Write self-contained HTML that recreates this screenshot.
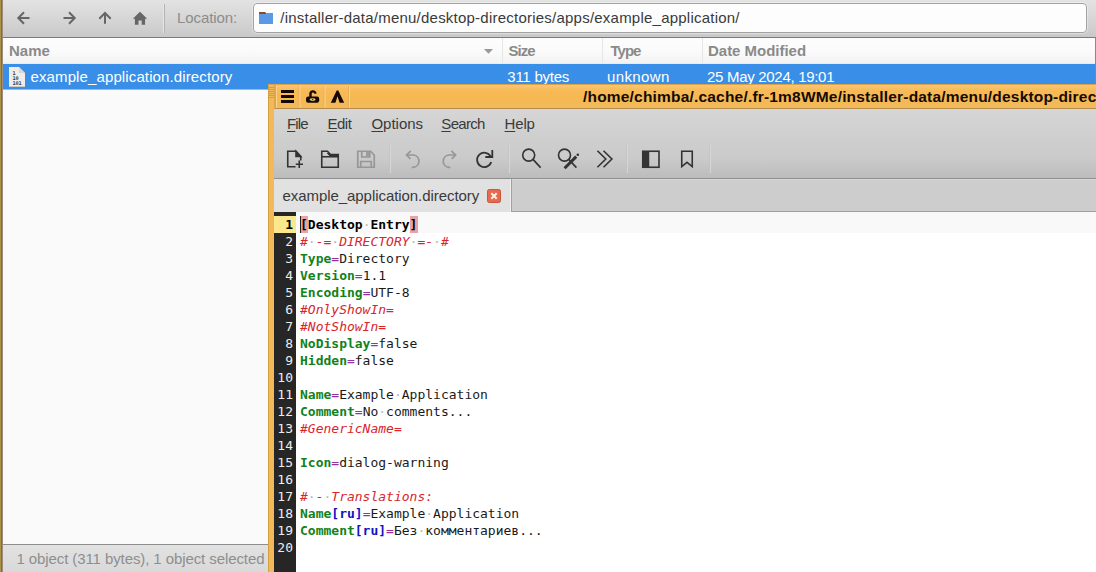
<!DOCTYPE html>
<html><head><meta charset="utf-8"><title>example_application.directory</title>
<style>
*{box-sizing:border-box;margin:0;padding:0}
html,body{width:1096px;height:572px;overflow:hidden;background:#fafafa}
body{position:relative;font-family:"Liberation Sans",sans-serif;font-size:15px;color:#3a3a3a}
.abs{position:absolute}
.t{position:absolute;white-space:nowrap;line-height:20px;height:20px}
/* outer file manager */
#lborder{left:0;top:0;width:3px;height:572px;background:linear-gradient(90deg,#ab9448 0,#ab9448 1px,#856b3b 1px,#856b3b 2px,#a08c80 2px)}
#ftool{left:2px;top:0;width:1094px;height:37px;background:linear-gradient(#e3e3e3,#c9c9c9)}
#ftoolline{left:2px;top:37px;width:1094px;height:1px;background:#7b7b7b}
#loc{left:253px;top:3px;width:834px;height:30px;background:#fdfdfd;border:1px solid #a3a3a3;border-radius:4px;box-shadow:0 0 0 1px rgba(255,255,255,.35)}
#hdr{left:2px;top:38px;width:1093px;height:26px;background:linear-gradient(#fdfdfd 0,#fafafa 60%,#f2f2f2 100%);border-bottom:1px solid #ebebeb}
.hsep{position:absolute;top:38px;width:1px;height:25px;background:#e6e6e6}
.hd{font-weight:bold;color:#8a8a8a}
#sel{left:2px;top:64px;width:1093px;height:26px;background:#398ee7;border-bottom:1px solid #8fbff1}
#rstrip{left:1095px;top:38px;width:1px;height:506px;background:#8a8a8a}
#status{left:2px;top:544px;width:1093px;height:28px;background:linear-gradient(#e2e2e2,#d9d9d9);border-top:1px solid #8e8e8e}
/* inner window */
#win{left:268px;top:84px;width:828px;height:488px;background:#f3b959;border-left:1px solid #d39f45;border-top:1px solid #dba247}
#title{left:275px;top:85px;width:821px;height:24px;background:linear-gradient(#f8c673 0,#f7ba56 25%,#f6b852 55%,#f1ba5c 100%);border-bottom:1px solid #b48b48}
#menubar{left:274px;top:109px;width:822px;height:31px;background:linear-gradient(#d6d6d6,#cecece)}
#tool{left:274px;top:140px;width:822px;height:39px;background:linear-gradient(#cecece 0,#cbcbcb 45%,#bcbcbc 100%);border-bottom:1px solid #8f8f8f}
.tsep{position:absolute;top:145px;width:2px;height:28px;background:linear-gradient(90deg,#c2c2c2 50%,#dadada 50%);opacity:.8}
#tabbar{left:274px;top:179px;width:822px;height:33px;background:#cdcdcd;border-top:1px solid #d8d8d8;border-bottom:1px solid #9f9f9f}
#tab{left:274px;top:179px;width:238px;height:33px;background:#e1e1e1;border-right:1px solid #a0a0a0;box-shadow:inset -1px 0 0 #f0f0f0}
#gutter{left:274px;top:212px;width:22px;height:360px;background:#262626}
#editor{left:296px;top:212px;width:800px;height:360px;background:#fff}
#curline{left:296px;top:212px;width:800px;height:21px;background:#f9f9f9}
#curnum{left:274px;top:216px;width:22px;height:17px;background:#fbe88c}
.ln,.cl{position:absolute;font-family:"DejaVu Sans Mono","Liberation Mono",monospace;font-size:13px;line-height:17px;height:17px;white-space:pre}
.ln{left:274px;width:19px;text-align:right;color:#ececec}
.cl{left:300px;color:#1a1a1a}
.k{color:#11821a;font-weight:bold}
.c{color:#d8252c;font-style:italic}
.e{color:#9a2fa0}
.l{color:#1212c4;font-weight:bold}
.s{font-weight:bold;color:#000}
.br{background:none}
.brbg{position:absolute;top:216px;width:8px;height:17px;background:#e9a3a6}
.ws{color:#b8b8b8;font-style:normal;font-weight:normal}
.cur{color:#000;font-weight:bold}
.m{color:#2c2c2c}
u{text-decoration:underline;text-underline-offset:2px}
</style></head><body>
<!-- file manager -->
<div class="abs" id="ftool"></div><div class="abs" id="ftoolline"></div>
<div class="abs" id="loc"></div>
<div class="abs" id="hdr"></div>
<div class="abs" id="sel"></div>
<div class="abs" id="rstrip"></div><div class="abs" style="left:1095px;top:64px;width:1px;height:20px;background:#5f8cc6"></div>
<div class="abs" id="status"></div>
<div class="abs" id="lborder"></div>

<svg class="abs" style="left:0;top:0" width="280" height="38" viewBox="0 0 280 38">
 <g fill="none" stroke="#666" stroke-width="2" stroke-linecap="butt" stroke-linejoin="miter">
  <path d="M29.500 18H18.500M24 12.300L18.300 18L24 23.700"/>
  <path d="M63.500 18H74.500M69 12.300L74.700 18L69 23.700"/>
  <path d="M105 23.800V13.500M99.300 18.700L105 13L110.700 18.700"/>
 </g>
 <path d="M140 11.800L132.800 18.700H134.900V24.800H138.500V20.400H141.700V24.800H145.100V18.700H147.200Z" fill="#666"/>
 <rect x="163" y="4" width="1" height="29" fill="#e6e6e6"/><rect x="164" y="4" width="1" height="29" fill="#b4b4b4"/>
 <path d="M259 12h6.200l1.300 1.700H273v10.300H259z" fill="#8a4c1c"/><path d="M259 14h7l1-1h6v11H259z" fill="#5b98e6"/>
</svg>
<div class="t" style="left:177px;top:8px;color:#8c8c8c;letter-spacing:-0.09px" id="tloc">Location:</div>
<div class="t" style="left:280.3px;top:8px;color:#3a3a3a;letter-spacing:0.228px" id="tpath">/installer-data/menu/desktop-directories/apps/example_application/</div>

<div class="t hd" style="left:9px;top:41px;letter-spacing:0.03px" id="hname">Name</div>
<div class="t hd" style="left:508.4px;top:41px;letter-spacing:-0.9px" id="hsize">Size</div>
<div class="t hd" style="left:610.5px;top:41px;letter-spacing:-1px" id="htype">Type</div>
<div class="t hd" style="left:708px;top:41px;letter-spacing:-0.02px" id="hdate">Date Modified</div>
<div class="hsep" style="left:502px"></div><div class="hsep" style="left:602px"></div><div class="hsep" style="left:702px"></div>
<svg class="abs" style="left:482px;top:46px" width="12" height="10"><path d="M2 3h9L6.500 7.800z" fill="#999"/></svg>

<svg class="abs" style="left:8px;top:66px" width="20" height="22" viewBox="8 66 20 22">
 <path d="M9 67H19L25 73V87H9Z" fill="#efecea"/><path d="M19 67V73H25Z" fill="#d9d5d2"/><path d="M9 86.500H25" stroke="#cfcbc8" stroke-width="1"/>
 <g font-family="'DejaVu Sans Mono','Liberation Mono',monospace" font-weight="bold" font-size="5.200" fill="#3a3636" letter-spacing="-0.200"><text x="12.600" y="75">1</text><text x="12.600" y="80">10</text><text x="12.600" y="85">101</text></g>
</svg>
<div class="t" style="left:30.5px;top:67px;color:#fff;letter-spacing:0.118px" id="tfile">example_application.directory</div>
<div class="t" style="left:507.3px;top:67px;color:#fff;letter-spacing:-0.25px" id="tsize">311 bytes</div>
<div class="t" style="left:607px;top:67px;color:#fff;letter-spacing:0.367px" id="ttype">unknown</div>
<div class="t" style="left:707px;top:67px;color:#fff;letter-spacing:-0.3px" id="tdate">25 May 2024, 19:01</div>
<div class="t" style="left:16.4px;top:549px;color:#8e8e8e;letter-spacing:-0.09px" id="tstatus">1 object (311 bytes), 1 object selected</div>

<!-- inner editor window -->
<div class="abs" id="win"></div>
<div class="abs" id="title"></div>
<svg class="abs" style="left:268px;top:84px" width="90" height="26" viewBox="268 84 90 26">
 <g stroke="#d59b45" stroke-width="1"><path d="M269 87.500h5M269 89.500h5M269 91.500h5M269 93.500h5M269 95.500h5M269 97.500h5"/></g>
 <rect x="274.500" y="85" width="1" height="24" fill="#c9913c"/>
 <g fill="#e9ad54"><rect x="298.500" y="86" width="1" height="22"/><rect x="323.500" y="86" width="1" height="22"/><rect x="348" y="86" width="1" height="22"/></g>
 <g fill="#fad391"><rect x="276" y="86" width="1" height="22"/><rect x="299.500" y="86" width="1" height="22"/><rect x="324.500" y="86" width="1" height="22"/><rect x="349" y="86" width="1" height="22"/></g>
 <g fill="#170808"><rect x="281" y="90" width="13" height="3"/><rect x="281" y="95" width="13" height="3"/><rect x="281" y="100" width="13" height="3"/></g>
 <path d="M310.500 97V94.500a2.500 2.700 0 0 1 5 -0.800" fill="none" stroke="#170808" stroke-width="2.400"/>
 <rect x="306" y="96.500" width="13.200" height="6.300" rx="2.200" fill="#170808"/>
 <ellipse cx="312.600" cy="99.600" rx="3" ry="1.300" fill="#e2cf6a"/><circle cx="312.600" cy="99.600" r="0.700" fill="#170808"/>
 <path d="M330.800 102.800L336.700 90.400H338.300L344.200 102.800H339.600L337.500 96.300L335.400 102.800Z" fill="#170808"/>
</svg>
<div class="t" style="left:583px;top:86.500px;font-weight:bold;color:#150a05;font-size:15.500px;letter-spacing:0.190px" id="ttitle">/home/chimba/.cache/.fr-1m8WMe/installer-data/menu/desktop-directories/apps/example_application/example_application.directory</div>

<div class="abs" id="menubar"></div>
<div class="t" style="left:287px;top:114px;letter-spacing:-0.9px" id="mfile"><u>F</u>ile</div>
<div class="t" style="left:327.4px;top:114px;letter-spacing:-0.467px" id="medit"><u>E</u>dit</div>
<div class="t" style="left:371.4px;top:114px;letter-spacing:0px" id="mopt"><u>O</u>ptions</div>
<div class="t" style="left:441.3px;top:114px;letter-spacing:-0.68px" id="msearch"><u>S</u>earch</div>
<div class="t" style="left:504.6px;top:114px;letter-spacing:-0.167px" id="mhelp"><u>H</u>elp</div>

<div class="abs" id="tool"></div>
<div class="tsep" style="left:389px"></div><div class="tsep" style="left:508px"></div><div class="tsep" style="left:626px"></div><div class="tsep" style="left:709px"></div>
<svg class="abs" style="left:274px;top:140px" width="440" height="39" viewBox="274 140 440 39" id="ticons">
 <g fill="none" stroke="#333" stroke-width="1.600">
  <path d="M295.500 166.750H287.750V151.250H296L300.750 156.500V160.500"/><path d="M296 151.250V156.500H300.750Z" fill="#343434"/><path d="M299.250 160.500V168M295.750 164.250H303"/>
  <path d="M321.750 151.250H327.500L330.500 154.500H338.250V167.250H321.750Z"/><path d="M327.200 153.200L330 156H338.250V154.500H330.500Z" fill="#343434" stroke-width="1"/><path d="M321.750 156.750H338.250"/>
  <path d="M490.600 156.400A7.200 7.200 0 1 0 491.200 162" stroke-width="1.800"/><path d="M492.300 150V157H485.300" stroke-width="1.800"/>
  <circle cx="528.700" cy="155.100" r="6"/><path d="M533 159.400L540.600 167.600"/>
  <circle cx="564.500" cy="155.100" r="6"/><path d="M568.800 159.400L576.400 167.600"/><path d="M564.600 168.200L576.200 156.600" stroke-width="3"/><circle cx="577.800" cy="154.800" r="1.300" fill="#333" stroke="none"/>
  <path d="M597.400 150.800L605.800 159L597.400 167.200M603.500 150.800L611.900 159L603.500 167.200"/>
  <rect x="642.750" y="151.250" width="16.250" height="16"/>
  <path d="M681.750 151.250H692.250V166.500L687 162.300L681.750 166.500Z"/>
 </g>
 <rect x="642.750" y="151.250" width="6.500" height="16" fill="#343434"/>
 <g fill="none" stroke="#979797" stroke-width="1.700">
  <path d="M357.750 151.250H370.500L374.250 155V167.250H357.750Z"/><path d="M361.750 151.250V157H369.750V151.250"/><rect x="366" y="151.500" width="3.500" height="5" fill="#9c9c9c" stroke="none"/><path d="M360.750 167.250V161.500H371.250V167.250"/>
  <path d="M410.800 150.800L406.600 155L410.400 158.800"/><path d="M406.800 155H413.500A6.200 6.200 0 0 1 413.500 167.300H411.800"/>
  <path d="M451.400 150.800L455.600 155L451.800 158.800"/><path d="M455.400 155H448.700A6.200 6.200 0 0 0 448.700 167.300H450.400"/>
 </g>
</svg>

<div class="abs" id="tabbar"></div><div class="abs" id="tab"></div>
<div class="t" style="left:282.500px;top:185.500px;color:#3a3a3a;letter-spacing:-0.060px" id="ttab">example_application.directory</div>
<svg class="abs" style="left:487px;top:189px" width="14" height="14"><rect x="0.500" y="0.500" width="13" height="13" rx="1.800" fill="#e66a4c" stroke="#c9573d"/><path d="M4.300 4.300l5.400 5.400M9.700 4.300l-5.400 5.400" stroke="#fdf0e4" stroke-width="2"/></svg>

<div class="abs" id="gutter"></div><div class="abs" id="editor"></div>
<div class="abs" id="curline"></div><div class="abs" id="curnum"></div>
<div class="abs" style="left:300px;top:216px;width:1px;height:17px;background:#222;z-index:3"></div>
<div class="brbg" style="left:300px"></div><div class="brbg" style="left:409.500px"></div>
<div id="lines">
<div class="ln cur" style="top:216px">1</div><div class="cl" style="top:216px"><span class="s"><span class="br">[</span>Desktop<i class="ws">·</i>Entry<span class="br">]</span></span></div>
<div class="ln" style="top:233px">2</div><div class="cl" style="top:233px"><span class="c">#<i class="ws">·</i>-=<i class="ws">·</i>DIRECTORY<i class="ws">·</i>=-<i class="ws">·</i>#</span></div>
<div class="ln" style="top:250px">3</div><div class="cl" style="top:250px"><span class="k">Type</span><span class="e">=</span>Directory</div>
<div class="ln" style="top:267px">4</div><div class="cl" style="top:267px"><span class="k">Version</span><span class="e">=</span>1.1</div>
<div class="ln" style="top:284px">5</div><div class="cl" style="top:284px"><span class="k">Encoding</span><span class="e">=</span>UTF-8</div>
<div class="ln" style="top:301px">6</div><div class="cl" style="top:301px"><span class="c">#OnlyShowIn=</span></div>
<div class="ln" style="top:318px">7</div><div class="cl" style="top:318px"><span class="c">#NotShowIn=</span></div>
<div class="ln" style="top:335px">8</div><div class="cl" style="top:335px"><span class="k">NoDisplay</span><span class="e">=</span>false</div>
<div class="ln" style="top:352px">9</div><div class="cl" style="top:352px"><span class="k">Hidden</span><span class="e">=</span>false</div>
<div class="ln" style="top:369px">10</div><div class="cl" style="top:369px"></div>
<div class="ln" style="top:386px">11</div><div class="cl" style="top:386px"><span class="k">Name</span><span class="e">=</span>Example<i class="ws">·</i>Application</div>
<div class="ln" style="top:403px">12</div><div class="cl" style="top:403px"><span class="k">Comment</span><span class="e">=</span>No<i class="ws">·</i>comments...</div>
<div class="ln" style="top:420px">13</div><div class="cl" style="top:420px"><span class="c">#GenericName=</span></div>
<div class="ln" style="top:437px">14</div><div class="cl" style="top:437px"></div>
<div class="ln" style="top:454px">15</div><div class="cl" style="top:454px"><span class="k">Icon</span><span class="e">=</span>dialog-warning</div>
<div class="ln" style="top:471px">16</div><div class="cl" style="top:471px"></div>
<div class="ln" style="top:488px">17</div><div class="cl" style="top:488px"><span class="c">#<i class="ws">·</i>-<i class="ws">·</i>Translations:</span></div>
<div class="ln" style="top:505px">18</div><div class="cl" style="top:505px"><span class="k">Name</span><span class="l">[ru]</span><span class="e">=</span>Example<i class="ws">·</i>Application</div>
<div class="ln" style="top:522px">19</div><div class="cl" style="top:522px"><span class="k">Comment</span><span class="l">[ru]</span><span class="e">=</span>Без<i class="ws">·</i>комментариев...</div>
<div class="ln" style="top:539px">20</div><div class="cl" style="top:539px"></div>
</div>
</body></html>
